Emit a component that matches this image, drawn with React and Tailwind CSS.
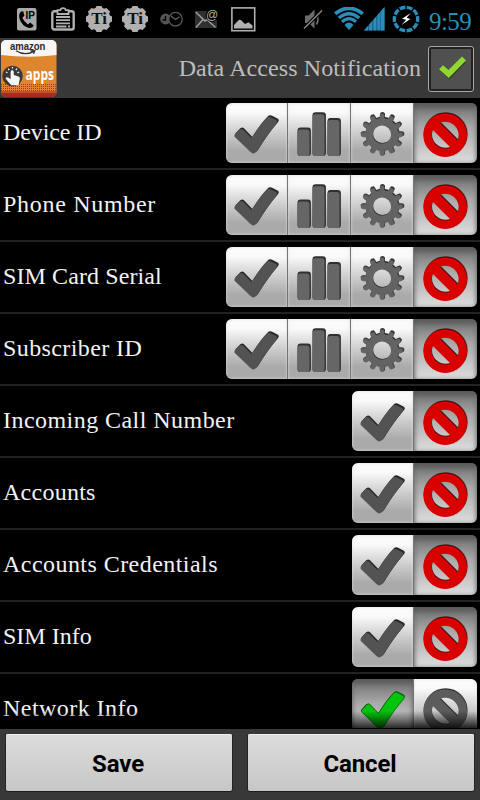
import React from "react";
import clsx from "clsx";

const SERIF = "font-['Liberation_Serif',serif]";

const rows = [
  { label: "Device ID", full: true, tracking: "tracking-[-0.1px]" },
  { label: "Phone Number", full: true, tracking: "tracking-[0.7px]" },
  { label: "SIM Card Serial", full: true, tracking: "tracking-[0.1px]" },
  { label: "Subscriber ID", full: true, tracking: "tracking-[0.4px]" },
  { label: "Incoming Call Number", tracking: "tracking-[0.45px]" },
  { label: "Accounts", tracking: "tracking-[0.25px]" },
  { label: "Accounts Credentials", tracking: "tracking-[0.45px]" },
  { label: "SIM Info", tracking: "tracking-[0px]" },
  { label: "Network Info", allowed: true, tracking: "tracking-[0.45px]" },
];

const CHECK =
  "M9.5 30.5 L14.5 25.2 Q16.5 23.4 18.3 25.2 L26.8 34 Q35 20.5 42.6 12.9 Q44.2 11.5 46.4 12.3 L52.3 15.2 Q54.6 16.5 53 18.8 Q42 31.5 32.4 47.6 Q29 51.5 25.8 48.4 L9.8 33 Q8.6 31.8 9.5 30.5 Z";

// every glyph is drawn twice, the darker copy gives the engraved edge
const CheckIcon = ({ on }) => (
  <svg width="62" height="60" viewBox="0 0 62 60">
    <path d={CHECK} fill={on ? "#0a4a0a" : "#2b2b2b"} />
    {on ? (
      <path d={CHECK} fill="#04c40c" stroke="#08700c" strokeWidth="0.8" transform="translate(0.8 1.3) scale(0.975)" />
    ) : (
      <path d={CHECK} fill="#535353" transform="translate(-0.4 2) scale(0.98)" />
    )}
  </svg>
);

const BarsIcon = () => (
  <svg width="62" height="60" viewBox="0 0 62 60">
    {[[9.5, 24.5, 28.5], [24.5, 9.2, 43.8], [39.5, 15, 38]].map(([x, y, h]) => (
      <g key={x}>
        <rect x={x} y={y} width="13.4" height={h} rx="3" fill="#303030" />
        <rect x={x} y={y + 2} width="12" height={h - 2} rx="2.6" fill="#666" />
      </g>
    ))}
  </svg>
);

const teeth = [0, 30, 60, 90, 120, 150, 180, 210, 240, 270, 300, 330];

const Gear = ({ color }) => (
  <g stroke={color} fill="none">
    <circle r="13.2" strokeWidth="7.6" />
    {teeth.map((a) => (
      <path key={a} d="M0 -15 V-19.3" strokeWidth="5" strokeLinecap="round" transform={`rotate(${a})`} />
    ))}
  </g>
);

const GearIcon = () => (
  <svg width="62" height="60" viewBox="0 0 62 60">
    <g transform="translate(31.5 30.7)"><Gear color="#353535" /></g>
    <g transform="translate(31 31.7) scale(0.97)"><Gear color="#636363" /></g>
  </svg>
);

const BanIcon = ({ off }) => (
  <svg width="62" height="60" viewBox="0 0 62 60">
    <g fill="none" strokeWidth="8.4" stroke={off ? "#353535" : "#4a1010"}>
      <circle cx="31.6" cy="31.2" r="17.8" />
      <path d="M19 18.7 L43.6 43.3" strokeWidth="10.4" />
    </g>
    <g fill="none" strokeWidth="8.4" stroke={off ? "#5c5c5c" : "#d90000"}>
      <circle cx="31.2" cy="32.2" r="17.6" />
      <path d="M18.7 19.7 L43.3 44.3" strokeWidth="10" />
    </g>
  </svg>
);

const Segment = ({ pressed, last, children }) => (
  <button
    className={clsx(
      "h-[60px] flex items-start overflow-hidden bg-gradient-to-b",
      last ? "w-[63px]" : "w-[63px] first:w-[62px] border-r border-[#747474]",
      pressed
        ? "from-[#6e6e6e] via-[#a9a9a9] via-40% to-[#dedede] shadow-[inset_0_5px_6px_-1px_#555,inset_0_0_4px_#8a8a8a]"
        : "from-[#fafafa] from-15% via-[#cdcdcd] via-50% to-[#aaaaaa] to-80% shadow-[inset_0_0_3px_#ddd]"
    )}
  >
    {children}
  </button>
);

const Row = ({ label, full, allowed, tracking }) => (
  <div className="h-[72px] shrink-0 flex items-center justify-between px-[3px] pb-[2px] border-b-2 border-[#222]">
    <span className={clsx("text-[24px] leading-[28px] text-[#f2f2f2] whitespace-nowrap", SERIF, tracking)}>{label}</span>
    <div className="flex shrink-0 rounded-[6px] overflow-hidden mt-[2px]">
      <Segment pressed={allowed}><CheckIcon on={allowed} /></Segment>
      {full && <Segment><BarsIcon /></Segment>}
      {full && <Segment><GearIcon /></Segment>}
      <Segment pressed={!allowed} last><BanIcon off={allowed} /></Segment>
    </div>
  </div>
);

const TiIcon = () => (
  <svg className="overflow-visible" width="26" height="26" viewBox="-13 -13 26 26">
    <circle r="11.4" fill="#b0b0b0" />
    {[0, 45, 90, 135, 180, 225, 270, 315].map((a) => (
      <path key={a} d="M-4 -10 L-2.5 -13 H2.5 L4 -10 Z" fill="#b0b0b0" transform={`rotate(${a})`} />
    ))}
    <text x="0" y="5.3" textAnchor="middle" fontSize="17" fontWeight="700" fontFamily="Liberation Serif" fill="#111">Ti</text>
  </svg>
);

const StatusBar = () => (
  <div className="h-[38px] flex items-center bg-black pl-[17px] pr-[9px]">
    {/* IP call */}
    <svg className="overflow-visible" width="20" height="23" viewBox="0 0 20 23">
      <rect width="19.5" height="22.5" rx="2" fill="#a9a9a9" />
      <path d="M4 3.5 Q1.2 6 2.6 11 Q5 18 11.8 20 Q15.3 20.5 16.8 17.5 L13.2 14.4 L10.9 16.4 Q6.9 13.6 5.3 9.7 L7.4 7.8 L6.2 3.2 Z" fill="#000" />
      <text x="8.6" y="10.6" fontSize="10" fontWeight="700" fontFamily="Liberation Sans" fill="#000">IP</text>
    </svg>
    {/* clipboard */}
    <svg className="ml-[14px]" width="24" height="24" viewBox="0 0 24 24" fill="none" stroke="#b0b0b0">
      <rect x="1.3" y="4.3" width="21.4" height="18.2" rx="2" strokeWidth="2.4" />
      <path d="M6.5 7 V3.2 H9.3 Q9.6 1.2 12 1.2 Q14.4 1.2 14.7 3.2 H17.5 V7 Z" fill="#000" strokeWidth="1.8" />
      <path d="M5 10 H19 M5 13.2 H19 M5 16.4 H19 M5 19.5 H15.5 M17 19.5 H19" strokeWidth="1.8" />
    </svg>
    <div className="ml-[11px] flex gap-[10px]">
      <TiIcon />
      <TiIcon />
    </div>
    {/* clocks */}
    <svg className="ml-[12px]" width="23" height="18" viewBox="0 0 23 18" fill="none">
      <circle cx="5.6" cy="9" r="5.4" fill="#555" />
      <path d="M5.5 6 V10 H2.5" stroke="#000" strokeWidth="1.3" />
      <circle cx="15.5" cy="9.2" r="6.8" fill="#000" stroke="#555" strokeWidth="1.4" />
      <path d="M11 6 L15.5 9.5 L19.5 6.8" stroke="#666" strokeWidth="1.2" />
    </svg>
    {/* mail */}
    <svg className="ml-[12px] overflow-visible" width="24" height="22" viewBox="0 0 24 22" fill="none">
      <rect x="0" y="3" width="22" height="17" fill="#303030" />
      <path d="M0.8 4 L10 13 L14 10 M1 19.5 L8 11.5 M12.5 12 L20.5 19.5" stroke="#a0a0a0" strokeWidth="1.4" />
      <circle cx="17" cy="7.5" r="6.4" fill="#000" />
      <text x="11" y="11" fontSize="12" fontFamily="Liberation Sans" fill="#b0b0b0">@</text>
    </svg>
    {/* picture */}
    <svg className="ml-[12px]" width="25" height="25" viewBox="0 0 25 25">
      <rect x="0.9" y="0.9" width="22.8" height="22.8" fill="#000" stroke="#b0b0b0" strokeWidth="1.6" />
      <path d="M3 21.5 V18 L7.5 13.2 Q9 12.2 10.5 13.5 L14 17 L17.5 15.2 L21.5 18.5 V21.5 Z" fill="#b0b0b0" />
    </svg>
    {/* muted */}
    <svg className="ml-auto" width="20" height="22" viewBox="0 0 20 22" fill="none">
      <path d="M2 7.5 H5.5 L11.5 1.5 V20.5 L5.5 15 H2 Z" fill="#6c6c6c" />
      <path d="M13.5 5.5 Q16.5 11 13.5 16.5" stroke="#777" strokeWidth="1.5" />
      <path d="M1 20.5 L19 2.5" stroke="#000" strokeWidth="3.4" />
      <path d="M1 20.5 L19 2.5" stroke="#8a8a8a" strokeWidth="1.5" />
    </svg>
    {/* wifi */}
    <svg className="ml-[11px]" width="30" height="24" viewBox="0 0 30 24" fill="none" stroke="#2a8dbb">
      <path d="M1.2 6.8 Q15 -4.2 28.8 6.8" strokeWidth="3.8" />
      <path d="M4.8 11 Q15 2.4 25.2 11" strokeWidth="3.3" />
      <path d="M8 14.9 Q15 8.4 22 14.9" strokeWidth="3.1" />
      <path d="M10.8 18 Q15 13.6 19.2 18 L15 22.8 Z" fill="#2a8dbb" strokeWidth="0.5" />
    </svg>
    {/* signal */}
    <svg width="21" height="24" viewBox="0 0 21 24">
      <path d="M0 23.5 L20.5 0 V23.5 Z" fill="#1e6689" />
      <path d="M0 23.5 L4 18.8 V23.5 Z M5.2 17.5 L8 14.3 V23.5 H5.2 Z M9.5 12.6 L12.2 9.5 V23.5 H9.5 Z M13.5 8 L15.8 5.4 V23.5 H13.5 Z M16.8 4.2 L20.5 0 V23.5 H16.8 Z" fill="#2a8dbb" />
    </svg>
    {/* battery ring */}
    <svg className="ml-[7px]" width="28" height="28" viewBox="-14 -14 28 28" fill="none">
      <circle r="11.7" stroke="#2a8dbb" strokeWidth="3.4" pathLength="100" strokeDasharray="8 2" transform="rotate(-86)" />
      <path d="M4.8 -6 L-4 -0.2 L0.2 0.8 L-4.5 6 L4.4 0 L0.6 -1.2 Z" fill="#fff" />
    </svg>
    <span className={clsx("ml-[9px] mt-[5px] w-[42px] text-[25px] leading-[28px] tracking-[-0.6px] text-[#2a8dbb] whitespace-nowrap", SERIF)}>9:59</span>
  </div>
);

const AppIcon = () => (
  <svg className="overflow-visible" width="56" height="57" viewBox="0 0 56 57">
    <defs>
      <clipPath id="tile"><rect width="55.5" height="57" rx="5" /></clipPath>
      <pattern id="grain" width="2" height="2" patternUnits="userSpaceOnUse">
        <rect width="1" height="1" fill="#b0301c" />
      </pattern>
    </defs>
    <g clipPath="url(#tile)">
      <rect width="56" height="57" fill="#dd862d" />
      <path d="M0 0 H56 V15 Q28 18.5 0 15 Z" fill="#f6f6f6" />
      <rect y="44" width="56" height="9" fill="url(#grain)" />
      <rect y="53" width="56" height="4" fill="#a82b1d" />
      <rect y="51" width="56" height="2" fill="#c05428" />
    </g>
    <text transform="translate(9 9.8) scale(0.88 1)" fontSize="10.8" fontWeight="700" fontFamily="Liberation Sans" fill="#2a2a2a">amazon</text>
    <path d="M15 10.8 Q23.5 16.2 32.5 11.6 M29.5 10.8 L33.8 10.6 L32.5 13.8" fill="none" stroke="#333" strokeWidth="1.3" />
    <circle cx="11.5" cy="36" r="10.3" fill="#393939" />
    <path d="M9.6 32.5 Q9.6 30 11.2 30 Q12.8 30 12.8 32.5 V35 L17.5 36.4 Q19.3 37 18.8 39 L17.4 45.3 H10.3 L4.6 38.8 Q5.2 36.8 7.3 37.6 L9.6 39.2 Z" fill="#f6f6f6" />
    <path d="M6.5 32.8 L5 32 M8.3 30 L7.2 28.6 M11.5 28.6 V27 M14.8 30 L16 28.6 M16.4 32.8 L18 32" stroke="#f6f6f6" strokeWidth="1.3" />
    <text transform="translate(24.6 40.4) scale(0.75 1)" fontSize="16" fontWeight="700" fontFamily="Open Sans" fill="#fff">apps</text>
  </svg>
);

const Header = () => (
  <div className="h-[60px] flex items-center bg-[#383838] pl-px pr-[6px]">
    <AppIcon />
    <span className={clsx("ml-auto text-[24px] leading-[28px] tracking-[0.1px] text-[#bdbdbd] whitespace-nowrap", SERIF)}>Data Access Notification</span>
    <div className="ml-[7px] mt-[2px] w-[46px] h-[46px] shrink-0 rounded-[3px] border-[1.5px] border-[#a8a8a8] bg-[#222] p-[2px]">
      <div className="w-full h-full bg-[#505050]">
        <svg width="40" height="40" viewBox="0 0 40 40">
          <path d="M8.5 21.3 L12.5 17.5 L18 22 L31 9 L35 13 L18.5 30.3 Z" fill="#353535" />
          <path d="M8 20.3 L12 16.3 L17.5 21 L31 7.6 L35 11.6 L17.8 29 Z" fill="#8fd92f" />
        </svg>
      </div>
    </div>
  </div>
);

const FooterButton = ({ children }) => (
  <button className="w-[226px] h-[57px] rounded-[2px] bg-gradient-to-b from-[#dcdcdc] to-[#c7c7c7] text-black text-[24px] leading-[28px] tracking-[-0.1px] font-bold font-['Roboto',sans-serif] pt-[2px] pr-[2px] shadow-[inset_0_1px_0_#f0f0f0,0_1px_0_#1c1c1c,1px_0_0_#242424,-1px_0_0_#242424]">
    {children}
  </button>
);

export default function App() {
  return (
    <div className="w-[480px] h-[800px] flex flex-col bg-black overflow-hidden">
      <StatusBar />
      <Header />
      <div className="relative h-[631px] shrink-0 overflow-hidden flex flex-col">
        {rows.map((r) => (
          <Row key={r.label} {...r} />
        ))}
        {/* scroll fade */}
        <div className="absolute inset-x-0 bottom-0 h-[18px] border-b border-black bg-gradient-to-b from-transparent to-black/80" />
      </div>
      <div className="h-[71px] shrink-0 flex items-start gap-[16px] bg-[#383838] pl-[6px] pt-[5px]">
        <FooterButton>Save</FooterButton>
        <FooterButton>Cancel</FooterButton>
      </div>
    </div>
  );
}
